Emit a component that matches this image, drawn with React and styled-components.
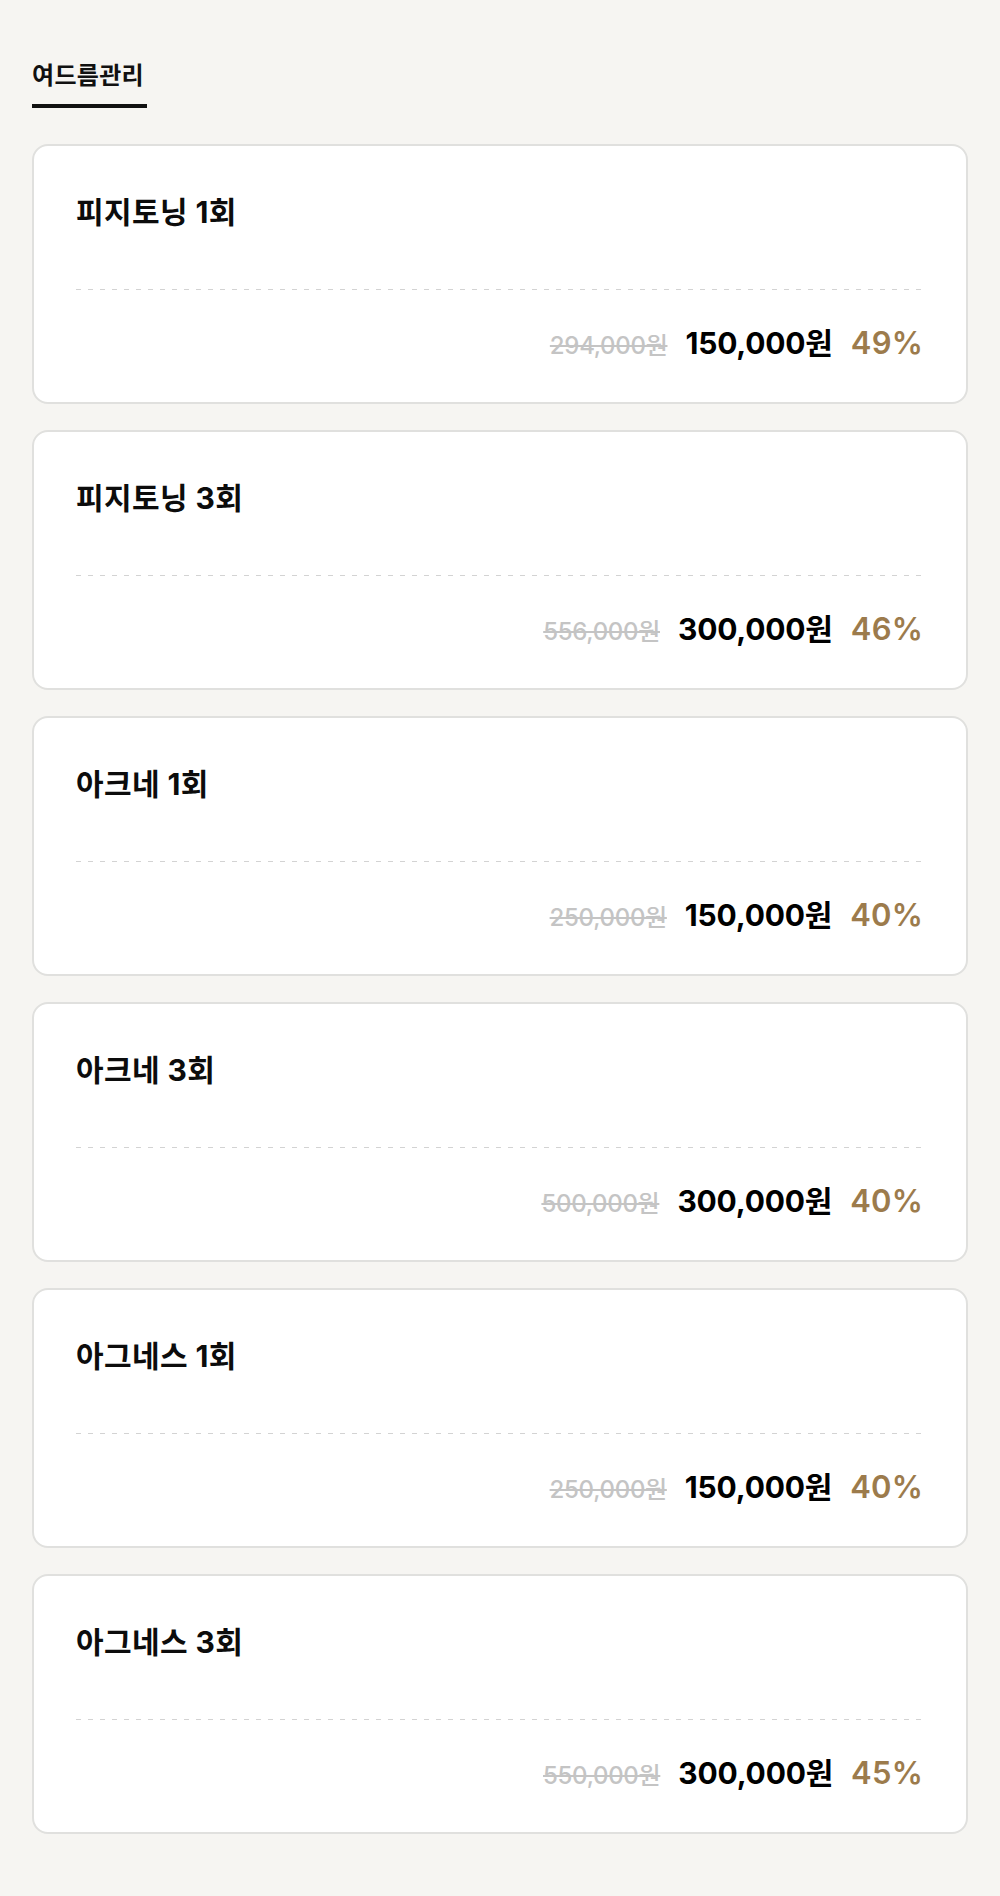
import React from "react";
import styled, { createGlobalStyle } from "styled-components";

const Global = createGlobalStyle`
  html, body { margin: 0; padding: 0; }
  body {
    background: #f6f5f2;
    font-family: "Inter", "Noto Sans CJK KR", sans-serif;
    color: #111;
  }
`;

const Page = styled.div`
  min-height: 1896px;
  box-sizing: border-box;
  padding: 60px 32px 60px;
  background: #f6f5f2;
`;

const Tabs = styled.div`
  display: flex;
  margin-bottom: 36px;
`;

const Tab = styled.div`
  font-size: 24px;
  line-height: 32px;
  font-weight: 700;
  letter-spacing: 0.3px;
  color: #111;
  padding: 0 3px 12px 0;
  border-bottom: 4px solid #111;
`;

const List = styled.div`
  display: flex;
  flex-direction: column;
  gap: 26px;
`;

const Card = styled.div`
  background: #fff;
  border: 2px solid #e0e0de;
  border-radius: 16px;
  padding: 46px 42px 36px;
  box-sizing: border-box;
  height: 260px;
  display: flex;
  flex-direction: column;
`;

const Title = styled.div`
  font-size: 30px;
  line-height: 40px;
  font-weight: 700;
  letter-spacing: 0.4px;
  color: #0c0c0c;
`;

const Dash = styled.div`
  height: 1px;
  margin-top: 57px;
  background-image: repeating-linear-gradient(
    to right,
    #d3d3d3 0 5px,
    transparent 5px 12px
  );
`;

const PriceRow = styled.div`
  margin-top: auto;
  display: flex;
  justify-content: flex-end;
  align-items: baseline;
  gap: 18px;
  line-height: 40px;
  margin-right: 1px;
`;

const OldPrice = styled.span`
  font-size: 24px;
  font-weight: 500;
  color: #c4c4c4;
  text-decoration: line-through;
  text-decoration-thickness: 2px;
  letter-spacing: -0.3px;
`;

const Price = styled.span`
  font-size: 30px;
  font-weight: 700;
  color: #000;
  letter-spacing: -0.2px;
`;

const Discount = styled.span`
  font-size: 31px;
  font-weight: 600;
  color: #9c7b4c;
  letter-spacing: 0.2px;
`;

const items = [
  { name: "피지토닝 1회", old: "294,000원", price: "150,000원", off: "49%" },
  { name: "피지토닝 3회", old: "556,000원", price: "300,000원", off: "46%" },
  { name: "아크네 1회", old: "250,000원", price: "150,000원", off: "40%" },
  { name: "아크네 3회", old: "500,000원", price: "300,000원", off: "40%" },
  { name: "아그네스 1회", old: "250,000원", price: "150,000원", off: "40%" },
  { name: "아그네스 3회", old: "550,000원", price: "300,000원", off: "45%" },
];

export default function App() {
  return (
    <>
      <Global />
      <Page>
        <Tabs>
          <Tab>여드름관리</Tab>
        </Tabs>
        <List>
          {items.map((it) => (
            <Card key={it.name}>
              <Title>{it.name}</Title>
              <Dash />
              <PriceRow>
                <OldPrice>{it.old}</OldPrice>
                <Price>{it.price}</Price>
                <Discount>{it.off}</Discount>
              </PriceRow>
            </Card>
          ))}
        </List>
      </Page>
    </>
  );
}
